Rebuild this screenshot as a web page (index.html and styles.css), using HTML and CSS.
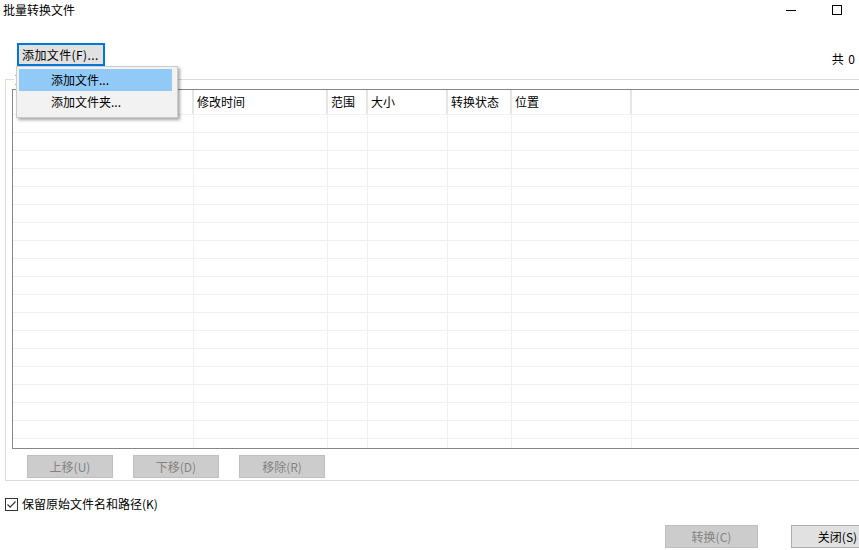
FILE: index.html
```html
<!DOCTYPE html>
<html lang="zh-CN">
<head>
    <meta charset="UTF-8">
    <title>批量转换文件</title>
    <link rel="stylesheet" href="styles.css">
</head>
<body>

    <div class="titlebar">
        <span class="title">批量转换文件</span>
        <div class="window-buttons">
            <span class="win-btn"><i class="min-icon"></i></span>
            <span class="win-btn"><i class="max-icon"></i></span>
        </div>
    </div>

    <div class="toolbar">
        <button class="btn btn-focus">添加文件(F)...</button>
        <span class="count">共 0</span>
    </div>

    <div class="group">
        <span class="group-label">文件列表</span>
        <div class="list-view">
            <div class="list-header">
                <div class="col">名称</div>
                <div class="col">修改时间</div>
                <div class="col">范围</div>
                <div class="col">大小</div>
                <div class="col">转换状态</div>
                <div class="col">位置</div>
                <div class="col"></div>
            </div>
            <div class="list-body" id="rows"></div>
        </div>
        <div class="list-buttons">
            <button class="btn" disabled>上移(U)</button>
            <button class="btn" disabled>下移(D)</button>
            <button class="btn" disabled>移除(R)</button>
        </div>
    </div>

    <label class="keep-path">
        <span class="checkbox">
            <svg width="11" height="11" viewBox="0 0 11 11"><path d="M1.5 5.5 L4.2 8.2 L9.5 2.5" fill="none" stroke="#333" stroke-width="1.2"/></svg>
        </span>
        保留原始文件名和路径(K)
    </label>

    <div class="footer">
        <button class="btn btn-wide" disabled>转换(C)</button>
        <button class="btn btn-wide">关闭(S)</button>
    </div>

    <!-- dropdown of the add button -->
    <div class="menu">
        <div class="menu-item active">添加文件...</div>
        <div class="menu-item">添加文件夹...</div>
    </div>

    <script>
        var body = document.getElementById("rows");
        for (var i = 0; i < 19; i++) {
            var row = document.createElement("div");
            row.className = i === 18 ? "list-row last" : "list-row";
            for (var c = 0; c < 7; c++) {
                row.appendChild(document.createElement("div"));
            }
            body.appendChild(row);
        }
    </script>
</body>
</html>
```

FILE: styles.css
```css
body {
    margin: 0;
    width: 859px;
    height: 550px;
    overflow: hidden;
    position: relative;
    background: #fff;
    font-family: "Noto Sans CJK SC", "Microsoft YaHei", sans-serif;
    font-size: 12px;
    color: #000;
}

.titlebar {
    display: flex;
    justify-content: space-between;
    height: 21px;
}

.title {
    padding-left: 3px;
    line-height: 20px;
}

.window-buttons {
    display: flex;
    margin-right: -1px;
}

.win-btn {
    width: 46px;
    height: 20px;
    display: flex;
    align-items: center;
    justify-content: center;
}

.min-icon {
    width: 10px;
    height: 1px;
    background: #000;
}

.max-icon {
    width: 8px;
    height: 8px;
    border: 1px solid #000;
    margin-top: -1px;
}

.toolbar {
    display: flex;
    justify-content: space-between;
    align-items: flex-end;
    margin-top: 22px;
    padding: 0 4px 0 17px;
}

.count {
    line-height: 16px;
    margin-bottom: -1px;
    word-spacing: 2px;
}

.btn {
    font-family: inherit;
    font-size: 12px;
    height: 23px;
    padding: 0 4px;
    background: #e1e1e1;
    border: 1px solid #adadad;
    color: #000;
}

.btn-focus {
    width: 88px;
    height: 23px;
    border: 2px solid #0078d7;
    padding: 0 3px;
    text-align: left;
    letter-spacing: 0.4px;
}

.btn:disabled {
    background: #cccccc;
    border-color: #bfbfbf;
    color: #838383;
}

.group {
    position: relative;
    margin: 13px -10px 0 5px;
    border: 1px solid #dcdcdc;
    padding: 9px 0 2px 6px;
}

.group-label {
    position: absolute;
    left: 8px;
    top: -8px;
    background: #fff;
    padding: 0 1px;
    line-height: 14px;
}

.list-view {
    height: 360px;
    box-sizing: border-box;
    border: 1px solid #828790;
    border-right: none;
    display: flex;
    flex-direction: column;
    overflow: hidden;
}

.list-header, .list-row {
    display: grid;
    grid-template-columns: 181px 134px 40px 80px 64px 120px 1fr;
}

.list-header {
    height: 24px;
    border-bottom: 1px solid #f0f0f0;
}

.list-header .col {
    line-height: 24px;
    padding-left: 3px;
    border-right: 2px solid #e5e5e5;
}

.list-header .col:last-child {
    border-right: none;
}

.list-body {
    flex: 1;
    display: flex;
    flex-direction: column;
}

.list-row {
    height: 17px;
    border-bottom: 1px solid #f0f0f0;
}

.list-row.last {
    flex: 1;
    border-bottom: none;
}

.list-row div {
    border-right: 1px solid #f0f0f0;
}

.list-row div:last-child {
    border-right: none;
}

.list-buttons {
    display: flex;
    gap: 20px;
    margin-top: 6px;
    padding-left: 15px;
}

.list-buttons .btn {
    width: 86px;
}

.keep-path {
    display: flex;
    align-items: center;
    gap: 4px;
    margin: 15px 0 0 5px;
    line-height: 16px;
}

.checkbox {
    width: 11px;
    height: 11px;
    border: 1px solid #333;
    display: flex;
}

.footer {
    display: flex;
    gap: 33px;
    margin: 13px -30px 0 0;
    padding-left: 665px;
}

.btn-wide {
    width: 93px;
    flex-shrink: 0;
}

.menu {
    position: absolute;
    left: 16px;
    top: 66px;
    width: 158px;
    height: 48px;
    padding: 2px 0 0 2px;
    background: #f2f2f2;
    border: 1px solid #cccccc;
    box-shadow: 2px 2px 3px rgba(0, 0, 0, 0.35);
}

.menu-item {
    width: 153px;
    height: 22px;
    line-height: 22px;
    padding-left: 32px;
    box-sizing: border-box;
}

.menu-item.active {
    background: #91c9f7;
}
```
